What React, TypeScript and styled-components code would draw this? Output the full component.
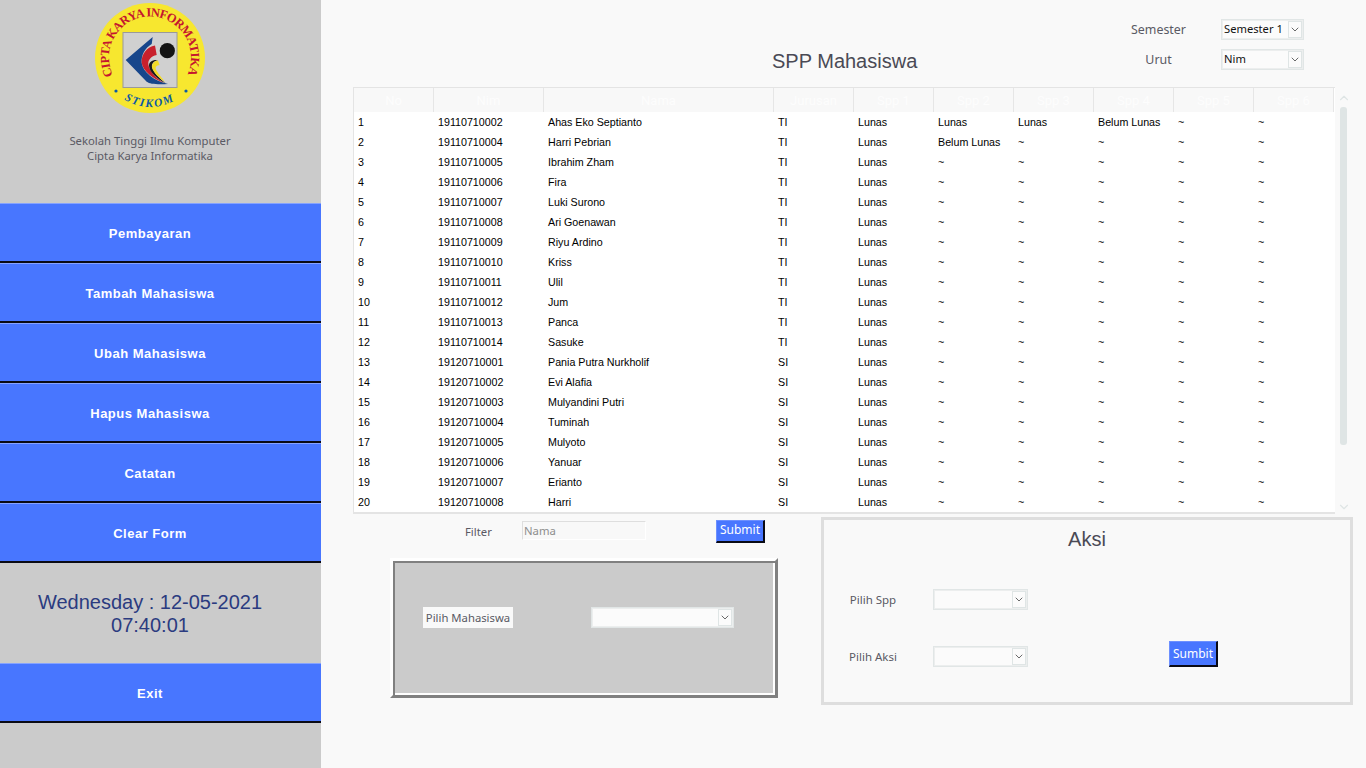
import React from 'react';
import styled, { createGlobalStyle } from 'styled-components';
import { ChevronDown, ChevronUp } from 'lucide-react';

const GlobalStyle = createGlobalStyle`
  html, body {
    margin: 0;
    height: 100%;
    overflow: hidden;
    background: #f9f9f9;
  }
  * {
    box-sizing: border-box;
  }
`;

type Student = [string, string, string, string[]];

const first: Student[] = [
  ['19110710002', 'Ahas Eko Septianto', 'TI', ['Lunas', 'Lunas', 'Lunas', 'Belum Lunas']],
  ['19110710004', 'Harri Pebrian', 'TI', ['Lunas', 'Belum Lunas']],
  ['19110710005', 'Ibrahim Zham', 'TI', ['Lunas']],
  ['19110710006', 'Fira', 'TI', ['Lunas']],
  ['19110710007', 'Luki Surono', 'TI', ['Lunas']],
  ['19110710008', 'Ari Goenawan', 'TI', ['Lunas']],
  ['19110710009', 'Riyu Ardino', 'TI', ['Lunas']],
  ['19110710010', 'Kriss', 'TI', ['Lunas']],
  ['19110710011', 'Ulil', 'TI', ['Lunas']],
  ['19110710012', 'Jum', 'TI', ['Lunas']],
  ['19110710013', 'Panca', 'TI', ['Lunas']],
  ['19110710014', 'Sasuke', 'TI', ['Lunas']],
  ['19120710001', 'Pania Putra Nurkholif', 'SI', ['Lunas']],
  ['19120710002', 'Evi Alafia', 'SI', ['Lunas']],
  ['19120710003', 'Mulyandini Putri', 'SI', ['Lunas']],
  ['19120710004', 'Tuminah', 'SI', ['Lunas']],
  ['19120710005', 'Mulyoto', 'SI', ['Lunas']],
  ['19120710006', 'Yanuar', 'SI', ['Lunas']],
  ['19120710007', 'Erianto', 'SI', ['Lunas']],
  ['19120710008', 'Harri', 'SI', ['Lunas']],
];

const columns = ['No', 'Nim', 'Nama', 'Jurusan', 'Spp 1', 'Spp 2', 'Spp 3', 'Spp 4', 'Spp 5', 'Spp 6'];
const columnWidths = [80, 110, 230, 80, 80, 80, 80, 80, 80, 80];
const menuTop = ['Pembayaran', 'Tambah Mahasiswa', 'Ubah Mahasiswa', 'Hapus Mahasiswa', 'Catatan', 'Clear Form'];

const Logo = () => (
  <LogoSvg viewBox="95 3 110 110">
    <defs>
      <path id="ringTop" d="M113 75.2 A41 41 0 1 1 187 75.2" />
      <path id="ringBottom" d="M124 99.5 A49 49 0 0 0 176 99.5" />
    </defs>
    <circle cx="150" cy="58" r="55" fill="#f7e72f" />
    <text fontFamily="'Liberation Serif', serif" fontWeight="700" fontSize="12.5" fill="#c5162e">
      <textPath href="#ringTop" textLength="164" lengthAdjust="spacing">CIPTA KARYA INFORMATIKA</textPath>
    </text>
    <text fontFamily="'Liberation Serif', serif" fontWeight="700" fontStyle="italic" fontSize="11.5" fill="#0b5aa5">
      <textPath href="#ringBottom" textLength="52" lengthAdjust="spacing">STIKOM</textPath>
    </text>
    <circle cx="116" cy="91" r="1.6" fill="#0b5aa5" />
    <circle cx="186" cy="91" r="1.6" fill="#0b5aa5" />
    <rect x="123" y="32.5" width="54" height="55" fill="#d0d0d0" stroke="#9a9a9a" />
    <path d="M125.7 60 L152.7 37 L151.7 44 C145 48 141 55 141.7 63 C143 72 154 81 168 84 C156 84.5 150 84 146.7 81.7 Z" fill="#17468b" />
    <path d="M155 45.5 L156.7 55 C151 56 148 60 148.3 64 C149 71 156 78 164 83 C153 79 143 71 141.7 63 C141 54 147 47 155 45.5 Z" fill="#c8202c" />
    <path d="M158 60 C154 61 151.5 63.5 152 67 C153 72 160 79 166 83.5 C157 79 149.5 72 149 66 C148.8 62 152 59.5 158 60 Z" fill="#1b1b1b" />
    <path d="M158 60.5 L159.5 65 C156.5 65.5 155 67 156 69.5 C157.5 73 162 78 165 82 C159 78 153 72 152 67.5 C151.5 64 154 61 158 60.5 Z" fill="#f3dc28" />
    <circle cx="167.3" cy="50.7" r="7.6" fill="#141414" />
  </LogoSvg>
);

const Select = ({ value, width }: { value?: string; width: number }) => (
  <SelectBox $width={width}>
    <SelectValue>{value}</SelectValue>
    <SelectArrow>
      <ChevronDown size={13} strokeWidth={1.6} color="#444" />
    </SelectArrow>
  </SelectBox>
);

export default function App() {
  return (
    <Page>
      <GlobalStyle />
      <Sidebar>
        <Brand>
          <Logo />
          <BrandText>
            Sekolah Tinggi Ilmu Komputer
            <br />
            Cipta Karya Informatika
          </BrandText>
        </Brand>
        {menuTop.map((item) => (
          <MenuButton key={item}>{item}</MenuButton>
        ))}
        <Clock>
          Wednesday : 12-05-2021
          <br />
          07:40:01
        </Clock>
        <MenuButton>Exit</MenuButton>
      </Sidebar>

      <Main>
        <Header>
          <Title>SPP Mahasiswa</Title>
          <HeaderForm>
            <HeaderLabel>Semester</HeaderLabel>
            <Select value="Semester 1" width={83} />
            <HeaderLabel>Urut</HeaderLabel>
            <Select value="Nim" width={83} />
          </HeaderForm>
        </Header>

        <TableArea>
          <TableFrame>
            <Table>
              <colgroup>
                {columnWidths.map((w, i) => (
                  <col key={i} width={w} />
                ))}
              </colgroup>
              <thead>
                <tr>
                  {columns.map((c) => (
                    <HeadCell key={c}>{c}</HeadCell>
                  ))}
                </tr>
              </thead>
              <tbody>
                {first.map(([nim, nama, jurusan, spp], i) => (
                  <Row key={nim}>
                    <Cell>{i + 1}</Cell>
                    <Cell>{nim}</Cell>
                    <Cell>{nama}</Cell>
                    <Cell>{jurusan}</Cell>
                    {[0, 1, 2, 3, 4, 5].map((s) => (
                      <Cell key={s}>{spp[s] ?? '~'}</Cell>
                    ))}
                  </Row>
                ))}
              </tbody>
            </Table>
          </TableFrame>
          <ScrollBar>
            <ChevronUp size={14} strokeWidth={2} color="#dfe5e5" />
            <ScrollThumb />
            <ScrollSpacer />
            <ChevronDown size={14} strokeWidth={2} color="#dfe5e5" />
          </ScrollBar>
        </TableArea>

        <Bottom>
          <LeftColumn>
            <FilterRow>
              <FieldLabel>Filter</FieldLabel>
              <FilterInput placeholder="Nama" />
              <SubmitButton>Submit</SubmitButton>
            </FilterRow>
            <StudentPanel>
              <StudentLabel>Pilih Mahasiswa</StudentLabel>
              <Select width={143} />
            </StudentPanel>
          </LeftColumn>

          <ActionPanel>
            <ActionTitle>Aksi</ActionTitle>
            <ActionBody>
              <ActionGrid>
                <ActionLabel>Pilih Spp</ActionLabel>
                <Select width={95} />
                <ActionLabel>Pilih Aksi</ActionLabel>
                <Select width={95} />
              </ActionGrid>
              <ActionSubmit>Sumbit</ActionSubmit>
            </ActionBody>
          </ActionPanel>
        </Bottom>
      </Main>
    </Page>
  );
}

const Page = styled.div`
  display: flex;
  width: 1366px;
  height: 768px;
  overflow: hidden;
  background: #f9f9f9;
  font-family: 'Noto Sans', sans-serif;
`;

const Sidebar = styled.aside`
  width: 321px;
  height: 768px;
  flex: none;
  background: #cbcbcb;
`;

const Brand = styled.div`
  height: 203px;
  padding: 3px 21px 0 0;
  display: flex;
  flex-direction: column;
  align-items: center;
`;

const LogoSvg = styled.svg`
  width: 110px;
  height: 110px;
  flex: none;
`;

const BrandText = styled.div`
  margin-top: 20px;
  font-size: 11.3px;
  line-height: 15px;
  color: #5a5a64;
  text-align: center;
`;

const MenuButton = styled.button`
  display: block;
  width: 321px;
  height: 60px;
  padding: 1px 21px 0 0;
  border: 0;
  border-top: 1px solid #86a3ff;
  border-bottom: 2px solid #0a0a14;
  background: #4876ff;
  color: #fff;
  font-family: 'Liberation Sans', Arial, sans-serif;
  font-size: 13px;
  font-weight: 700;
  letter-spacing: 0.5px;
`;

const Clock = styled.div`
  height: 100px;
  padding: 28px 21px 0 0;
  font-family: 'Liberation Sans', Arial, sans-serif;
  font-size: 20px;
  line-height: 23px;
  color: #2b3b80;
  text-align: center;
`;

const Main = styled.main`
  flex: 1;
  padding-left: 32px;
`;

const Header = styled.header`
  display: flex;
  align-items: flex-start;
  height: 87px;
`;

const Title = styled.h1`
  margin: 49px 0 0 419px;
  font-family: 'Liberation Sans', Arial, sans-serif;
  font-size: 20px;
  line-height: 24px;
  font-weight: 400;
  color: #4a4a55;
  white-space: nowrap;
`;

const HeaderForm = styled.div`
  margin: 19px 62px 0 auto;
  display: grid;
  grid-template-columns: 79px 83px;
  grid-auto-rows: 21px;
  column-gap: 23px;
  row-gap: 9px;
  align-items: center;
`;

const HeaderLabel = styled.span`
  font-size: 12.4px;
  color: #5a5a64;
  text-align: center;
`;

const SelectBox = styled.div<{ $width: number }>`
  display: flex;
  align-items: center;
  width: ${(p) => p.$width}px;
  height: 21px;
  padding-right: 1px;
  border: 1px solid #e1e6e6;
  box-shadow: inset 0 0 0 1px #eceeee;
  background: #fbfbfb;
`;

const SelectValue = styled.span`
  flex: 1;
  padding: 0 0 2px 2px;
  font-size: 11.2px;
  color: #111;
  white-space: nowrap;
`;

const SelectArrow = styled.span`
  display: flex;
  align-items: center;
  justify-content: center;
  width: 14px;
  height: 17px;
  flex: none;
  border: 1px solid #dfe5e5;
`;

const TableArea = styled.div`
  display: flex;
  align-items: stretch;
`;

const TableFrame = styled.div`
  width: 982px;
  height: 427px;
  border: 1px solid #e4e4e4;
  border-bottom-width: 2px;
  border-right: 0;
  background: #fff;
`;

const Table = styled.table`
  width: 980px;
  table-layout: fixed;
  border-collapse: separate;
  border-spacing: 0;
  font-family: 'Liberation Sans', Arial, sans-serif;
  font-size: 10.7px;
  color: #000;
`;

const HeadCell = styled.th`
  height: 24px;
  padding: 0;
  background: #f8f8f8;
  border-right: 1px solid #e6e6e6;
  color: #fdfdfd;
  font-family: Roboto, sans-serif;
  font-size: 13px;
  font-weight: 400;
  text-align: center;
`;

const Row = styled.tr`
  height: 20px;
`;

const Cell = styled.td`
  height: 20px;
  padding: 0 0 0 4px;
  white-space: nowrap;
`;

const ScrollBar = styled.div`
  width: 15px;
  height: 427px;
  margin-left: 1px;
  display: flex;
  flex-direction: column;
  align-items: center;
  padding-top: 4px;
`;

const ScrollThumb = styled.div`
  width: 7px;
  height: 338px;
  margin-top: 2px;
  border-radius: 3px;
  background: #dfe5e5;
`;

const ScrollSpacer = styled.div`
  flex: 1;
`;

const Bottom = styled.div`
  display: flex;
  align-items: flex-start;
  margin-top: 3px;
`;

const LeftColumn = styled.div`
  width: 425px;
  flex: none;
  padding-top: 3px;
`;

const FilterRow = styled.div`
  display: flex;
  align-items: center;
  height: 23px;
  padding-left: 112px;
`;

const FieldLabel = styled.span`
  width: 57px;
  margin-bottom: 1px;
  font-size: 11.3px;
  color: #5a5a64;
`;

const FilterInput = styled.input`
  width: 124px;
  height: 19px;
  margin: 0 70px 2px 0;
  padding: 0 1px;
  border: 1px solid;
  border-color: #dedede #fff #fff #dedede;
  background: #f8f8f8;
  font-family: 'Noto Sans', sans-serif;
  font-size: 11.3px;
  &::placeholder {
    color: #8d8d8d;
    opacity: 1;
  }
`;

const SubmitButton = styled.button`
  width: 49px;
  height: 23px;
  padding: 0 0 3px;
  border: 1px solid;
  border-color: #6d90ff #0a0a14 #0a0a14 #6d90ff;
  border-width: 1px 2px 2px 1px;
  background: #4876ff;
  color: #fff;
  font-family: 'Noto Sans', sans-serif;
  font-size: 12px;
`;

const StudentPanel = styled.section`
  width: 388px;
  height: 140px;
  margin: 15px 0 0 37px;
  padding: 46px 0 0 30px;
  display: flex;
  align-items: flex-start;
  border: 3px solid;
  border-color: #fff #808080 #808080 #fff;
  box-shadow: inset 2px 2px 0 #808080, inset -2px -2px 0 #fff;
  background: #cbcbcb;
`;

const StudentLabel = styled.span`
  width: 90px;
  height: 21px;
  margin-right: 78px;
  background: #f9f9f9;
  font-size: 11.3px;
  line-height: 21px;
  color: #5a5a64;
  text-align: center;
`;

const ActionPanel = styled.section`
  width: 532px;
  height: 188px;
  margin-left: 43px;
  border: 3px solid #dedede;
  background: #f9f9f9;
`;

const ActionTitle = styled.h2`
  margin: 7px 0 0;
  font-family: 'Liberation Sans', Arial, sans-serif;
  font-size: 20px;
  line-height: 24px;
  font-weight: 400;
  color: #4a4a55;
  text-align: center;
`;

const ActionBody = styled.div`
  display: flex;
  align-items: flex-end;
  margin-top: 38px;
  padding-left: 23px;
`;

const ActionGrid = styled.div`
  display: grid;
  grid-template-columns: 52px 95px;
  grid-auto-rows: 21px;
  column-gap: 34px;
  row-gap: 36px;
  align-items: center;
`;

const ActionLabel = styled.span`
  font-size: 11.5px;
  color: #5a5a64;
  text-align: center;
`;

const ActionSubmit = styled(SubmitButton)`
  height: 26px;
  margin-left: 141px;
  padding: 0;
`;
